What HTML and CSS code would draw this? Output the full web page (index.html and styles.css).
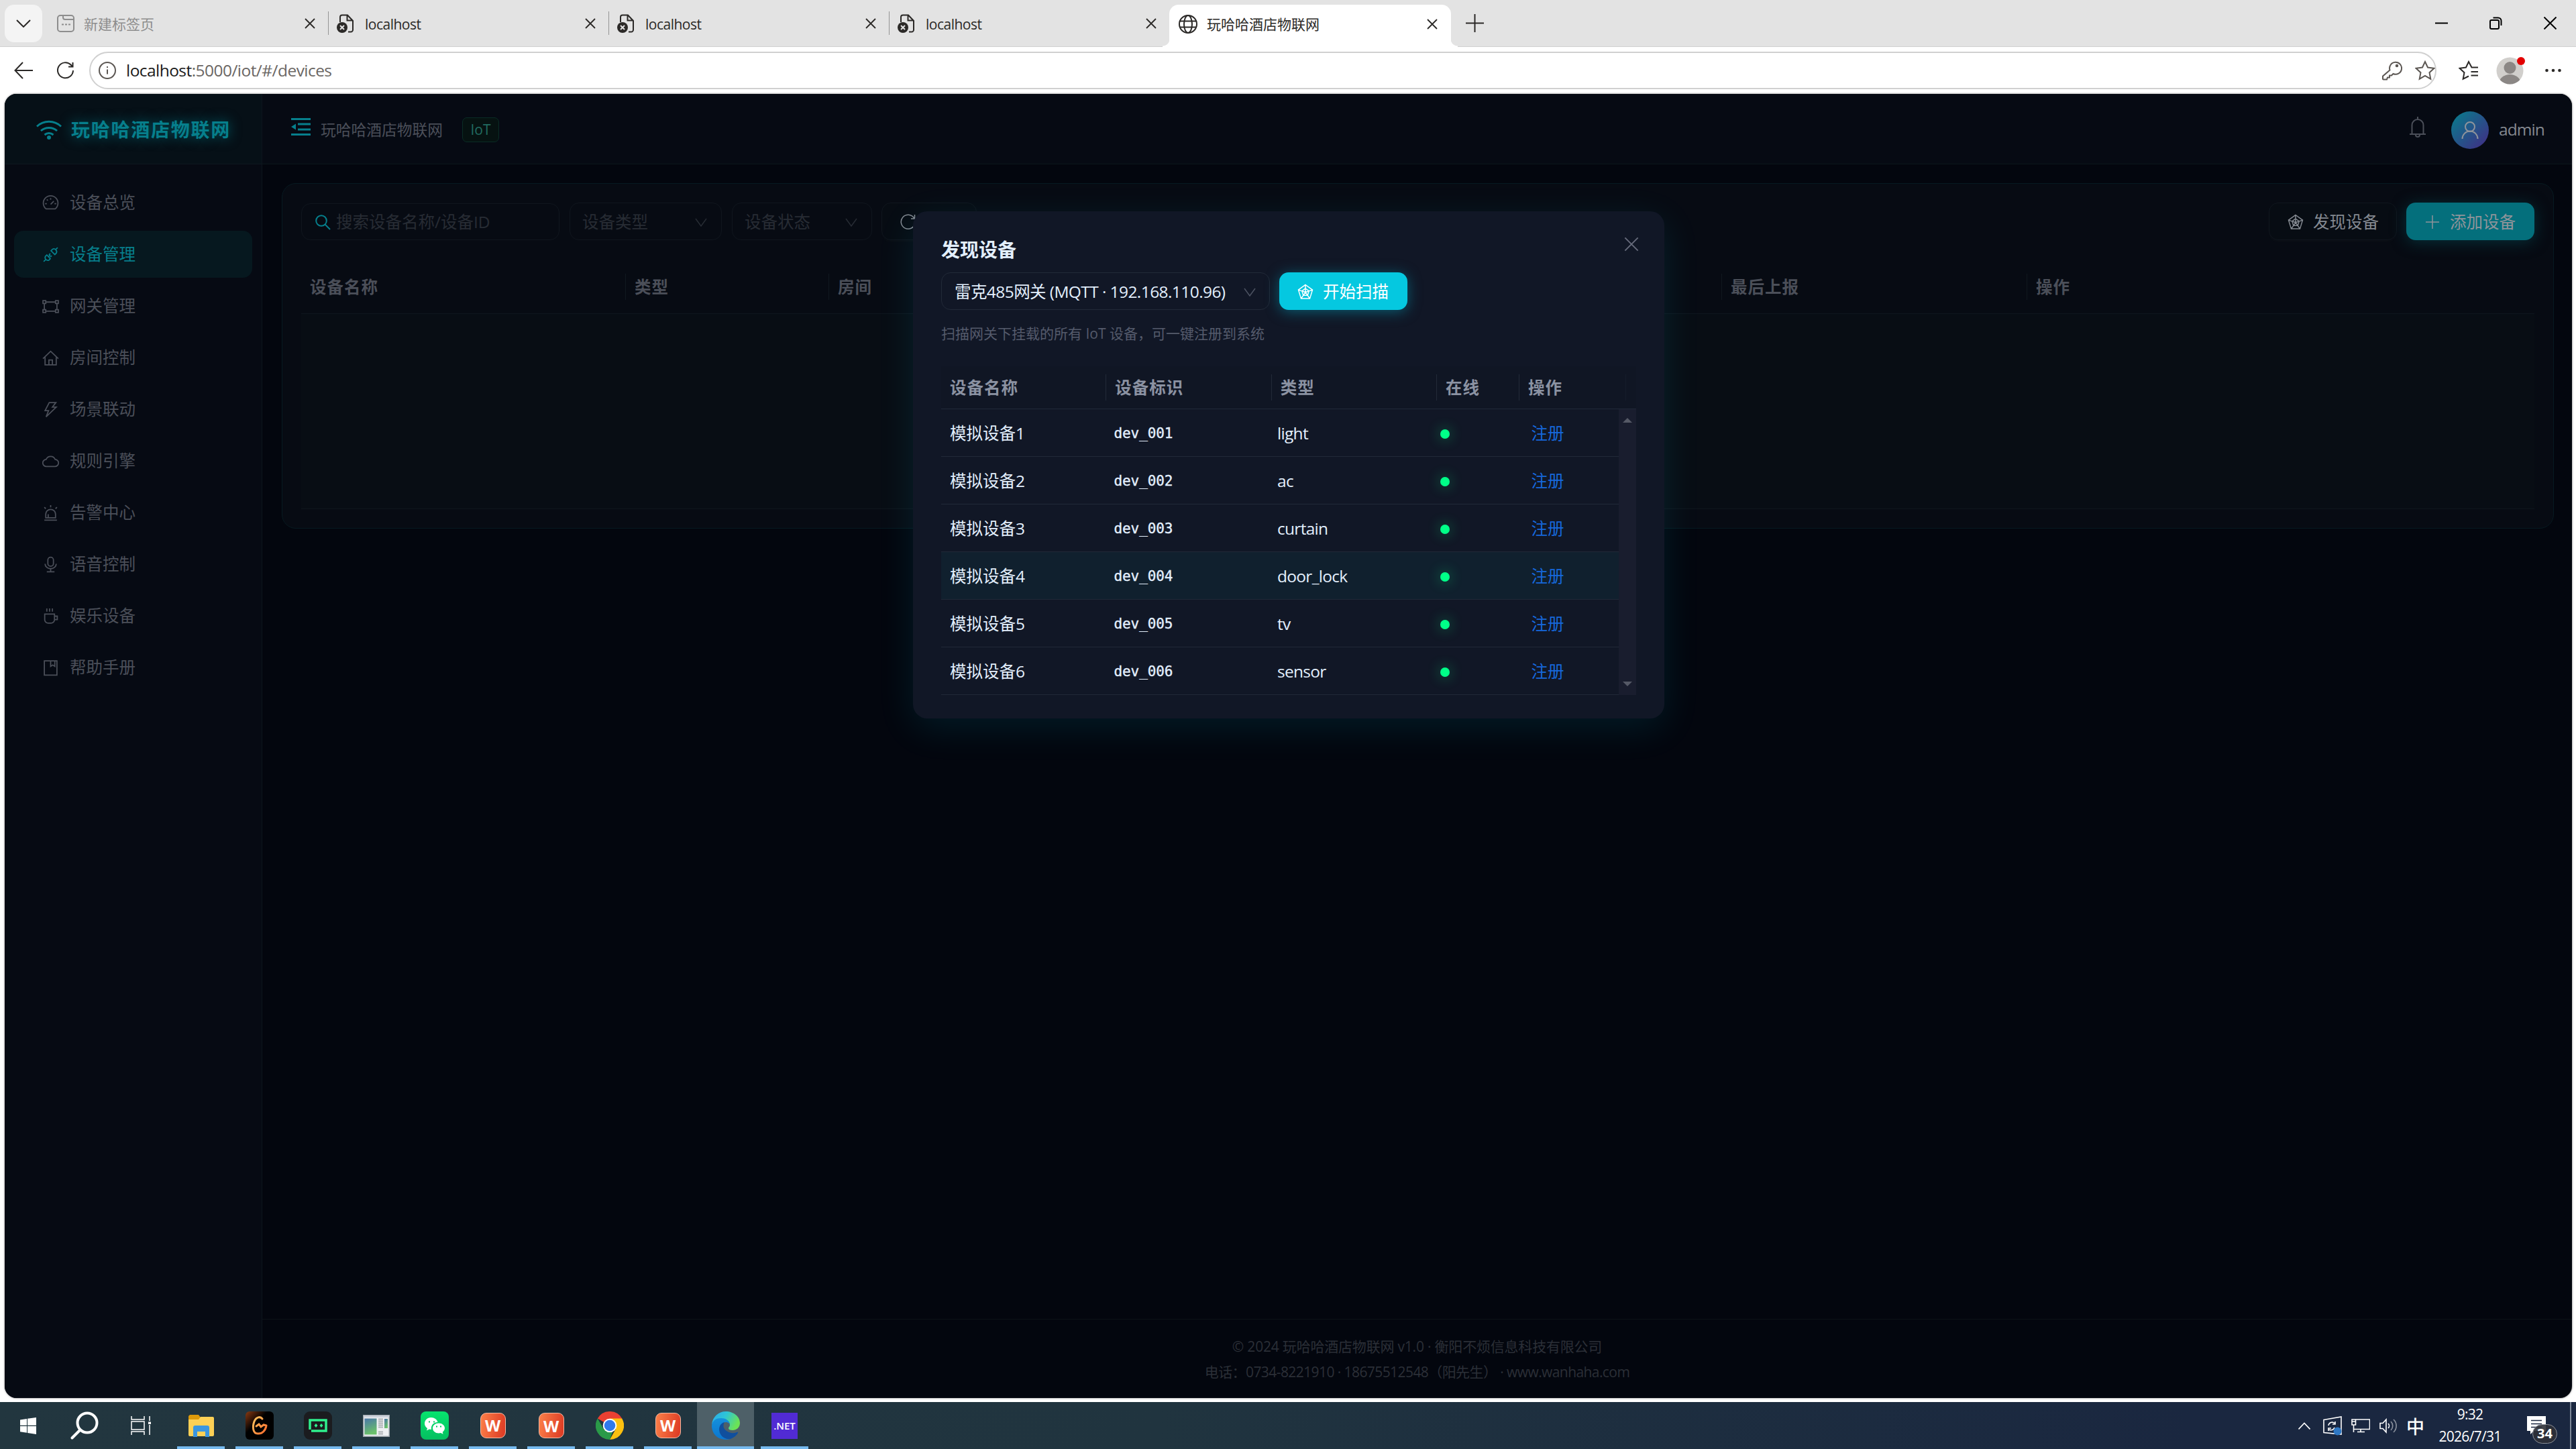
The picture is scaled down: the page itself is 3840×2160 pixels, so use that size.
FILE: index.html
```
<!DOCTYPE html>
<html lang="zh-CN">
<head>
<meta charset="utf-8">
<title>玩哈哈酒店物联网</title>
<link rel="stylesheet" href="styles.css">
</head>
<body>

<svg class="defs" width="0" height="0">
  <symbol id="i-x" viewBox="0 0 16 16"><path d="M1 1l14 14M15 1L1 15"/></symbol>
  <symbol id="i-down" viewBox="0 0 18 13"><path d="M1 1l8 11 8-11"/></symbol>
  <symbol id="i-errpage" viewBox="0 0 26 28">
    <path d="M5 12V4.500a3 3 0 0 1 3-3h8l8 8.500v13.500a3 3 0 0 1-3 3h-4M15.500 1.500V9.500H24"/>
    <circle cx="8" cy="20" r="8" fill="#2b2927" stroke="none"/>
    <path d="M5 17l6 6M11 17l-6 6" stroke="#e3e3e3"/>
  </symbol>
  <symbol id="i-radar" viewBox="0 0 24 24">
    <path d="M12 1.500l10.500 7.600-4 13h-13l-4-13zM12 7l5.200 3.900-2 6.300H8.800l-2-6.300zM12 1.500v11M22.500 9.100L12 12.800M18.500 22.100L12 12.800M5.500 22.100L12 12.800M1.500 9.100L12 12.800"/>
  </symbol>
</svg>

<!-- browser tabs -->
<div class="tabstrip">
  <div class="tabmenu"><svg width="22" height="12" viewBox="0 0 22 12"><path d="M1 1l10 10L21 1"/></svg></div>
  <div class="tab first dim">
    <svg class="fav" width="26" height="26" viewBox="0 0 26 26"><rect x="1" y="1" width="24" height="24" rx="4"/><path d="M9 1v3a3 3 0 0 0 3 3h13M7 14.500h3M12 14.500h3M17 14.500h3"/></svg>
    <span>新建标签页</span><svg class="close" width="16" height="16"><use href="#i-x"/></svg>
  </div>
  <div class="tab"><svg class="fav" width="26" height="28"><use href="#i-errpage"/></svg><span>localhost</span><svg class="close" width="16" height="16"><use href="#i-x"/></svg></div>
  <div class="tab"><svg class="fav" width="26" height="28"><use href="#i-errpage"/></svg><span>localhost</span><svg class="close" width="16" height="16"><use href="#i-x"/></svg></div>
  <div class="tab"><svg class="fav" width="26" height="28"><use href="#i-errpage"/></svg><span>localhost</span><svg class="close" width="16" height="16"><use href="#i-x"/></svg></div>
  <div class="tab active">
    <svg class="fav" width="28" height="28" viewBox="0 0 28 28"><circle cx="14" cy="14" r="13"/><ellipse cx="14" cy="14" rx="6" ry="13"/><path d="M2 9.500h24M2 18.500h24"/></svg>
    <span>玩哈哈酒店物联网</span><svg class="close" width="16" height="16"><use href="#i-x"/></svg>
  </div>
  <svg class="newtab" width="27" height="27" viewBox="0 0 27 27"><path d="M13.500 0v27M0 13.500h27"/></svg>
  <div class="wincontrols">
    <svg width="19" height="19" viewBox="0 0 19 19"><path d="M0 9.500h19"/></svg>
    <svg width="19" height="19" viewBox="0 0 19 19"><rect x="1" y="5" width="13" height="13" rx="2"/><path d="M5.500 1.500H13a4.500 4.500 0 0 1 4.500 4.500v7"/></svg>
    <svg width="19" height="19" viewBox="0 0 19 19"><path d="M.5.500l18 18M18.500.500l-18 18"/></svg>
  </div>
</div>

<!-- address bar -->
<div class="toolbar">
  <svg class="back" width="28" height="26" viewBox="0 0 28 26"><path d="M13 1L1.500 13 13 25M1.500 13H28"/></svg>
  <svg class="reload" width="26" height="26" viewBox="0 0 26 26"><path d="M24 13A11.500 11.500 0 1 1 20.500 4.500l3 3M23.500 1v6.500H17"/></svg>
  <div class="url">
    <svg width="26" height="26" viewBox="0 0 26 26"><circle cx="13" cy="13" r="12"/><path d="M13 11.500v7M13 7v2"/></svg>
    <span class="addr"><b>localhost</b>:5000/iot/#/devices</span>
    <svg class="key" width="30" height="30" viewBox="0 0 30 30"><path d="M11.500 14.500a9 9 0 1 1 5 5.500l-2.500 2.500h-3v3H8l-1 3H2a1 1 0 0 1-1-1v-4z"/><circle cx="22" cy="8" r="1.300" fill="#5c5753"/></svg>
    <svg class="star" width="30" height="30" viewBox="0 0 30 30"><path d="M15 2l4 8.500 9.500 1.200-7 6.500 1.800 9.500L15 23l-8.300 4.700 1.800-9.500-7-6.500 9.500-1.200z"/></svg>
  </div>
  <svg class="favs" width="30" height="30" viewBox="0 0 30 30"><path d="M28 10.500h-8.500L15 2l-4 8.500-9.500 1.200 7 6.500-1.800 9.500L15 23.500M18.500 17H29M18.500 22.500H29M20 10.500h9"/></svg>
  <div class="profile">
    <svg width="41" height="41" viewBox="0 0 41 41"><defs><clipPath id="pc"><circle cx="20.500" cy="20.500" r="20"/></clipPath></defs><circle cx="20.500" cy="20.500" r="20" fill="#d1cfcc"/><g clip-path="url(#pc)" fill="#8b8785"><circle cx="20.500" cy="16" r="9"/><ellipse cx="20.500" cy="39" rx="16" ry="13"/></g></svg>
    <i></i>
  </div>
  <svg class="more" width="24" height="6" viewBox="0 0 24 6"><circle cx="2.500" cy="3" r="2.300"/><circle cx="12" cy="3" r="2.300"/><circle cx="21.500" cy="3" r="2.300"/></svg>
</div>

<!-- application -->
<div class="app">
  <aside class="sidebar">
    <div class="logo">
      <svg width="38" height="32" viewBox="0 0 38 32"><path d="M1 11.500a26 26 0 0 1 36 0M7 18a18 18 0 0 1 24 0M12.500 24a10 10 0 0 1 13 0"/><circle cx="19" cy="28" r="3"/></svg>
      <span>玩哈哈酒店物联网</span>
    </div>
    <ul class="menu">
      <li><svg viewBox="0 0 24 24"><path d="M5.500 20.500a10.500 10.500 0 1 1 13 0zM12 5v2.500M6.500 7l1.500 1.500M4 13h2.500M17.500 13H20M12 14l4.500-4.500"/></svg>设备总览</li>
      <li class="on"><svg viewBox="0 0 24 24"><path d="M2 22l3-3M22 2l-3 3M12.500 6.500l2-2a4 4 0 0 1 5.500 5.500l-2 2zM6.500 12.500l-2 2A4 4 0 0 0 9.500 20l2-2zM9 15l2.500-2.500M11.500 10.500L9.500 12.500M13.500 13.500l-2 2"/></svg>设备管理</li>
      <li><svg viewBox="0 0 24 24"><path d="M1 4h4v4H1zM19 4h4v4h-4zM1 17h4v4H1zM19 17h4v4h-4zM5 6h14M5 19h14M3 8v9M21 8v9"/></svg>网关管理</li>
      <li><svg viewBox="0 0 24 24"><path d="M1 13L12 2.500 23 13M4 11v11h16V11M9.500 22v-7h5v7"/></svg>房间控制</li>
      <li><svg viewBox="0 0 24 24"><path d="M10 2h9.500l-5 6.500H20L5.500 22.500 9 13.500H4z"/></svg>场景联动</li>
      <li><svg viewBox="0 0 24 24"><path d="M6 19.500a5 5 0 0 1-.500-10 7 7 0 0 1 13 0 5 5 0 0 1-.500 10z"/></svg>规则引擎</li>
      <li><svg viewBox="0 0 24 24"><path d="M5 19v-5a7 7 0 0 1 14 0v5zM3 22.500h18M12 1v3M3 4l2 2M21 4l-2 2M8.500 19v-5"/></svg>告警中心</li>
      <li><svg viewBox="0 0 24 24"><rect x="8" y="1.500" width="8" height="13" rx="4"/><path d="M4 11a8 7 0 0 0 16 0M12 18v4.500M6.500 22.500h11"/></svg>语音控制</li>
      <li><svg viewBox="0 0 24 24"><path d="M3.500 9h14v8a5 5 0 0 1-5 5h-4a5 5 0 0 1-5-5zM17.500 12h4v5h-4M6.500 1v4.500M10.500 1v4.500M14.500 1v4.500"/></svg>娱乐设备</li>
      <li><svg viewBox="0 0 24 24"><path d="M3 2h18v20.500H3zM12 2v8l3-2 3 2V2"/></svg>帮助手册</li>
    </ul>
  </aside>

  <div class="main">
    <header class="topbar">
      <svg class="fold" width="29" height="26" viewBox="0 0 29 26"><path d="M0 1.500h29M10 9h19M10 17h19M0 24.500h29"/><path d="M7 8.500v9L0 13z" class="solid"/></svg>
      <span class="crumb">玩哈哈酒店物联网</span>
      <span class="tag">IoT</span>
      <svg class="bell" width="24" height="31" viewBox="0 0 24 31"><path d="M3.500 26V12.500a8.500 8.500 0 0 1 17 0V26M0 26h24M12 0v4M9 27a3 3 0 0 0 6 0"/></svg>
      <div class="avatar"><svg width="26" height="26" viewBox="0 0 26 26"><circle cx="13" cy="8" r="7"/><path d="M1.500 26a11.500 11.500 0 0 1 23 0"/></svg></div>
      <span class="user">admin</span>
    </header>

    <section class="content">
      <div class="card">
        <div class="filters">
          <div class="search"><svg width="23" height="23" viewBox="0 0 23 23"><circle cx="9" cy="9" r="7.800"/><path d="M14.500 14.500l7.500 7.500"/></svg>搜索设备名称/设备ID</div>
          <div class="select s1">设备类型<svg width="18" height="13"><use href="#i-down"/></svg></div>
          <div class="select s2">设备状态<svg width="18" height="13"><use href="#i-down"/></svg></div>
          <div class="btn refresh"><svg width="24" height="24" viewBox="0 0 24 24"><path d="M22 14a10.500 10.500 0 1 1-1.500-8M21.500 1v6H16"/></svg>刷新</div>
          <div class="btn push"><svg width="24" height="24"><use href="#i-radar"/></svg>发现设备</div>
          <div class="btn primary"><svg width="24" height="24" viewBox="0 0 24 24"><path d="M12 2v20M2 12h20"/></svg>添加设备</div>
        </div>
        <div class="thead">
          <div>设备名称</div><div>类型</div><div>房间</div><div>最后上报</div><div>操作</div>
        </div>
        <div class="tbody"></div>
      </div>
    </section>

    <footer class="footer">
      <p class="f1">© 2024 玩哈哈酒店物联网 v1.0 · 衡阳不烦信息科技有限公司</p>
      <p class="f2">电话：0734-8221910 · 18675512548（阳先生） · www.wanhaha.com</p>
    </footer>
  </div>

  <!-- discover dialog -->
  <div class="modal">
    <svg class="mclose" width="22" height="22" viewBox="0 0 16 16"><path d="M1 1l14 14M15 1L1 15"/></svg>
    <h2>发现设备</h2>
    <div class="scan">
      <div class="gateway"><span>雷克485网关 (MQTT · 192.168.110.96)</span><svg width="18" height="13"><use href="#i-down"/></svg></div>
      <div class="btn go"><svg width="24" height="24"><use href="#i-radar"/></svg>开始扫描</div>
    </div>
    <p class="hint">扫描网关下挂载的所有 IoT 设备，可一键注册到系统</p>
    <div class="dhead"><div>设备名称</div><div>设备标识</div><div>类型</div><div>在线</div><div>操作</div><div></div></div>
    <div class="dbody">
      <div class="rows">
        <div class="row"><span>模拟设备1</span><code>dev_001</code><span>light</span><span><i class="dot"></i></span><a>注册</a></div>
        <div class="row"><span>模拟设备2</span><code>dev_002</code><span>ac</span><span><i class="dot"></i></span><a>注册</a></div>
        <div class="row"><span>模拟设备3</span><code>dev_003</code><span>curtain</span><span><i class="dot"></i></span><a>注册</a></div>
        <div class="row hover"><span>模拟设备4</span><code>dev_004</code><span>door_lock</span><span><i class="dot"></i></span><a>注册</a></div>
        <div class="row"><span>模拟设备5</span><code>dev_005</code><span>tv</span><span><i class="dot"></i></span><a>注册</a></div>
        <div class="row"><span>模拟设备6</span><code>dev_006</code><span>sensor</span><span><i class="dot"></i></span><a>注册</a></div>
      </div>
      <div class="scrollbar"><i class="up"></i><i class="down"></i></div>
    </div>
  </div>
</div>

<!-- taskbar -->
<div class="taskbar">
  <div class="sys"><svg width="24" height="25" viewBox="0 0 24 25"><path fill="#fff" d="M0 3.500l10-1.500v9.800H0zM11 1.800L24 0v11.800H11zM0 12.900h10v9.800L0 21.200zM11 12.900h13V25l-13-1.900z"/></svg></div>
  <div class="sys"><svg class="thick" width="42" height="42" viewBox="0 0 42 42"><circle cx="25" cy="17" r="14.500"/><path d="M14 28L2.500 39.500"/></svg></div>
  <div class="sys"><svg class="thin" width="30" height="28" viewBox="0 0 30 28"><path d="M1 0v5h19V0M1 28v-5h19v5M1 8h19v12H1zM28 0v7M28 13v15"/><path fill="#fff" stroke="none" d="M26 8.500h4v3.500h-4z"/></svg></div>

  <div class="task start"><svg width="38" height="34" viewBox="0 0 38 34"><path fill="#dd9a0b" d="M2 1h13l3 4-2 4H0V3z"/><path fill="#fdd056" d="M0 8h15l3-4h18a2 2 0 0 1 2 2v25a2 2 0 0 1-2 2H2a2 2 0 0 1-2-2z"/><path fill="#3b96e0" d="M7 34V20a3 3 0 0 1 3-3h18a3 3 0 0 1 3 3v14h-6v-8H13v8z"/></svg></div>
  <div class="task"><svg width="42" height="42" viewBox="0 0 42 42"><defs><linearGradient id="g1" x2="1" y2="1"><stop stop-color="#8a3a12"/><stop offset=".4" stop-color="#000"/></linearGradient><linearGradient id="g2" x2="1" y2="1"><stop stop-color="#ffc861"/><stop offset="1" stop-color="#ff6a2b"/></linearGradient></defs><rect width="42" height="42" rx="6" fill="url(#g1)"/><path d="M25 11c-3-4-9-3-12 4-3 8-2 18 5 18 7 1 12-5 13-12M16 22l4-3 3 4 4-3 4 1" fill="none" stroke="url(#g2)" stroke-width="3" stroke-linecap="round"/></svg></div>
  <div class="task"><svg width="42" height="42" viewBox="0 0 42 42"><rect width="42" height="42" rx="9" fill="#1b1c1f"/><path fill="none" stroke="#2ff08d" stroke-width="3.500" d="M9 27V13h24v16H11"/><path fill="#2ff08d" d="M18 18l2.500 3-2.500 3-2.500-3zM26 18l2.500 3-2.500 3-2.500-3z"/></svg></div>
  <div class="task"><svg width="40" height="33" viewBox="0 0 40 33"><defs><linearGradient id="g3" y2="1" x2=".3"><stop stop-color="#4a76a8"/><stop offset="1" stop-color="#6bc06a"/></linearGradient></defs><rect x=".5" y=".5" width="39" height="32" fill="#eef0f2" stroke="#9aa2a8"/><path fill="#cdd2dc" d="M1 1h38v3H1z"/><rect x="2.500" y="5.500" width="18" height="24" fill="url(#g3)"/><rect x="32" y="6" width="5" height="14" fill="url(#g3)"/><path stroke="#aeb2b5" d="M23 6.500h7M23 9.500h7M23 12.500h7M23 15.500h7M23 18.500h7M23 25.500h7M23 28.500h7"/></svg></div>
  <div class="task"><svg width="42" height="42" viewBox="0 0 42 42"><defs><linearGradient id="g4" x2="0" y2="1"><stop stop-color="#06e46e"/><stop offset="1" stop-color="#05bf60"/></linearGradient></defs><rect width="42" height="42" rx="8" fill="url(#g4)"/><path fill="#fff" d="M15.500 9C10 9 6 13 6 18c0 3 1.500 5.500 4 7l-1 3.500 4-2c1 .3 2 .4 3 .4C15 20 20 16 25.500 16 24.500 12 20.500 9 15.500 9z"/><path fill="#fff" d="M27 17.500c-5 0-9 3.200-9 7.500s4 7.500 9 7.500c1 0 2-.2 3-.500l3.500 1.700-.800-3c2-1.500 3.300-3.500 3.300-5.700 0-4.300-4-7.500-9-7.500z"/><path d="M12 14.500h2v2h-2zM19 14.500h2v2h-2zM23 21.500h2v2h-2zM29 21.500h2v2h-2z" fill="#07c963"/></svg></div>
  <div class="task"><div class="wps">W</div></div>
  <div class="task"><div class="wps low">W</div></div>
  <div class="task"><svg width="42" height="42" viewBox="0 0 42 42"><path fill="#ea4032" d="M21 21L2.800 10.500a21 21 0 0 1 36.400 0z"/><path fill="#fcc010" d="M21 10.500h18.200A21 21 0 0 1 21 42l9-16z"/><path fill="#2a9a48" d="M2.800 10.500L12 26.500l9 5 4-1L21 42A21 21 0 0 1 2.800 10.500z"/><circle cx="21" cy="21" r="10.300" fill="#fff"/><circle cx="21" cy="21" r="8.300" fill="#3079ee"/></svg></div>
  <div class="task"><div class="wps">W</div></div>
  <div class="task current"><svg width="42" height="42" viewBox="0 0 42 42"><defs><linearGradient id="e1" x2="1" y2=".4"><stop stop-color="#2ba8ee"/><stop offset=".5" stop-color="#2ec5d6"/><stop offset="1" stop-color="#6be356"/></linearGradient><linearGradient id="e2" x2="0" y2="1"><stop stop-color="#1590dc"/><stop offset="1" stop-color="#0b76cf"/></linearGradient></defs><path fill="url(#e1)" d="M0 20C1 8 10 0 21 0c12 0 21 8 21 17 0 7-5 11-11 11-4 0-6-1-6-3 0-1.500 2-2 2-5 0-4-4-9-12-9C8 11 2 14 0 20z"/><path fill="url(#e2)" d="M0 21c1-8 7-11 14-11 8 0 13 5 13 10-1-3-3-4-6-4-5 0-7 6-5 12 2 7 7 11 12 13C13 45 0 36 0 21z"/><path fill="#104f9d" d="M19 16c-8 2-10 11-6 18 3 5 9 8 15 7 5-2 9-5 11-9 .5-1-.5-1.500-1.500-1-10 4-19-3-20-8 0-3 0-5 1.500-7z"/></svg></div>
  <div class="task"><div class="net">.NET</div></div>

  <div class="tray">
    <svg class="t1" width="18" height="11" viewBox="0 0 18 11"><path d="M.5 10.500L9 1.500l8.500 9"/></svg>
    <svg class="t2" width="28" height="29" viewBox="0 0 28 29"><path d="M1 5.500L27 1v26L1 24.500z"/><path d="M8 14a5.500 5.500 0 0 1 9-3.500M18 8v4h-4M17 17a5.500 5.500 0 0 1-8 3M8 22v-4h4"/><circle cx="21.500" cy="22.500" r="6" fill="#2f78c4" stroke="none"/></svg>
    <svg class="t3" width="28" height="21" viewBox="0 0 28 21"><path d="M7 1h20.500v14.500H4M14 15.500v4M9 19.500h11M1 1h5.500v8H1zM3.500 9v11M1 4h5.500"/></svg>
    <svg class="t4" width="27" height="23" viewBox="0 0 27 23"><path d="M1 7.500h4l5-5.500v19l-5-5.500H1zM13 8a5 5 0 0 1 0 7"/><path class="faint" d="M17 5a9 9 0 0 1 0 13M21 2a13 13 0 0 1 0 19"/></svg>
    <span class="ime">中</span>
    <div class="clock"><span>9:32</span><span>2026/7/31</span></div>
    <div class="notice"><svg width="28" height="29" viewBox="0 0 28 29"><path fill="#fff" d="M0 0h28v22H10l-5 5v-5H0z"/><path stroke="#1a2740" stroke-width="1.600" d="M6 6.500h16M6 11.500h16M6 16.500h16"/></svg><b>34</b></div>
  </div>
</div>

</body>
</html>
```

FILE: styles.css
```
* { box-sizing: border-box; }
body {
  margin: 0; width: 3840px; height: 2160px; overflow: hidden; background: #fff;
  display: flex; flex-direction: column;
  font: 24.5px/1 "Open Sans", "Noto Sans CJK SC", sans-serif;
}
svg { display: block; flex: none; fill: none; stroke: currentColor; stroke-width: 2; }
.defs { position: absolute; }
p, h2, ul { margin: 0; padding: 0; }

/* tabs */
.tabstrip { height: 70px; flex: none; display: flex; align-items: center; background: #e3e3e3; border-bottom: 1px solid #d0d0d0; font-size: 21px; color: #2b2927; padding-left: 7px; }
.tabmenu { width: 56px; height: 56px; border-radius: 14px; background: #f4f4f4; display: flex; align-items: center; justify-content: center; }
.tab { width: 418px; height: 35px; border-left: 1px solid #959595; display: flex; align-items: center; padding: 0 19px 0 12px; }
.tab span { flex: 1; padding: 3px 0 0 16px; letter-spacing: -.5px; }
.tab.first { width: 426px; border: 0; padding-left: 22px; }
.tab.first span { padding-left: 14px; letter-spacing: 0; }
.dim .fav, .dim span { color: #8d8d8d; }
.close { stroke-width: 1.8; }
.tab.active { position: relative; width: 420px; height: 63px; align-self: flex-end; margin-bottom: -1px; background: #fff; border: 0; border-radius: 14px 14px 0 0; padding: 0 20px 6px 14px; }
.tab.active span { padding: 2px 0 0 14px; letter-spacing: 0; }
.tab.active:before, .tab.active:after { content: ""; position: absolute; bottom: 0; width: 10px; height: 12px; }
.tab.active:before { left: -10px; background: radial-gradient(circle at 0 0, #e3e3e3 10px, #fff 11px); }
.tab.active:after { right: -10px; background: radial-gradient(circle at 100% 0, #e3e3e3 10px, #fff 11px); }
.newtab { margin-left: 22px; }
.wincontrols { margin-left: auto; display: flex; gap: 62px; padding-right: 29px; color: #000; }

/* address bar */
.toolbar { height: 70px; flex: none; display: flex; align-items: center; color: #2b2927; padding-left: 21px; }
.reload { margin-left: 36px; }
.url { width: 3499px; height: 56px; margin-left: 22px; border: 2px solid #d0d0d0; border-radius: 28px; display: flex; align-items: center; color: #5c5753; padding: 0 0 0 12px; }
.addr { flex: 1; margin-left: 15px; color: #6b6764; letter-spacing: -.55px; }
.addr b { font-weight: 400; color: #1b1b1b; }
.star { margin: 0 0 0 19px; }
.url { padding-right: 0; }
.key { margin-right: 0; }
.favs { margin-left: 33px; }
.profile { position: relative; margin-left: 26px; }
.profile svg { stroke: none; }
.profile i { position: absolute; right: -2px; top: 0; width: 12px; height: 12px; border-radius: 50%; background: #e30000; }
.more { margin-left: 32px; fill: #2b2927; stroke: none; }

/* app frame */
.app { position: relative; display: flex; height: 1944px; margin: 0 6px 0 7px; border-radius: 18px; overflow: hidden; background: #03060e; box-shadow: 0 0 3px #777; flex: none; }
.sidebar { width: 384px; flex: none; background: #060a13; border-right: 1px solid #0d151d; }
.logo { height: 105px; display: flex; align-items: center; gap: 14px; padding: 2px 0 0 47px; background: #061017; border-bottom: 1px solid #0d171f; color: #067f8c; font-size: 28px; font-weight: 700; letter-spacing: 1.75px; white-space: nowrap; }
.logo span { text-shadow: 0 0 18px #04606c; }
.logo svg { stroke-width: 3; }
.logo circle { fill: currentColor; stroke: none; }
.menu { list-style: none; padding: 22px 14px; display: flex; flex-direction: column; gap: 7px; color: #4b4f59; }
.menu li { height: 70px; border-radius: 14px; display: flex; align-items: center; padding-left: 42px; padding-top: 1px; }
.menu svg { width: 25px; height: 25px; margin-right: 16px; stroke-width: 1.7; }
.menu .on { background: #06181f; color: #067f8c; }

.main { flex: 1; display: flex; flex-direction: column; }
.topbar { height: 105px; flex: none; display: flex; align-items: center; padding: 3px 42px 0 43px; background: #060a13; border-bottom: 1px solid #0b161c; color: #4b4f59; }
.fold { color: #067f8c; margin-bottom: 10px; stroke-width: 3; }
.solid { fill: currentColor; stroke: none; }
.crumb { font-size: 22.75px; margin-left: 15px; padding-top: 2px; }
.tag { margin-left: 29px; width: 55px; height: 37px; border: 1px solid #0a2c26; border-radius: 7px; background: #061211; color: #216b60; font-size: 21px; display: flex; align-items: center; justify-content: center; }
.bell { margin: 0 38px 8px auto; }
.avatar { width: 56px; height: 56px; border-radius: 50%; background: linear-gradient(135deg, #067f8c, #432a85); display: flex; align-items: center; justify-content: center; color: #8f949c; }
.user { width: 67px; margin-left: 15px; color: #83888f; letter-spacing: -.9px; }

.content { flex: 1; padding: 28px 27px 0 29px; }
.card { height: 515px; border: 1px solid #071a21; border-radius: 21px; background: #070b13; padding: 28px; }
.filters { display: flex; align-items: center; height: 56px; color: #272c34; }
.search { width: 385px; height: 55px; border: 1px solid #10161e; border-radius: 14px; display: flex; align-items: center; gap: 8px; padding: 2px 0 0 20px; }
.search svg { color: #067f8c; }
.select { height: 56px; border: 1px solid #10161e; border-radius: 14px; display: flex; align-items: center; justify-content: space-between; padding: 2px 21px 0 18px; margin-left: 15px; }
.select svg { stroke-width: 1.5; }
.s1 { width: 227px; }
.s2 { width: 209px; }
.btn { height: 56px; width: 191px; border: 1px solid #10161e; border-radius: 14px; display: flex; align-items: center; padding: 2px 0 0 27px; gap: 14px; color: #848991; background: #070c13; box-shadow: 0 3px 0 #090d14; white-space: nowrap; }
.btn svg { stroke-width: 1.5; }
.refresh { width: 142px; margin-left: 14px; }
.push { margin-left: auto; }
.primary, .go { margin-left: 14px; border: 0; }
.primary { background: #046f7c; color: #8f949a; box-shadow: 0 3px 22px #063039; }
.go { background: #05c8e0; color: #fff; box-shadow: 0 3px 20px #0a5b70; }
.thead { display: flex; height: 80px; margin-top: 30px; border-bottom: 1px solid #0f161e; background: #070b13; color: #4b4f59; font-weight: 700; letter-spacing: 1px; }
.thead div { position: relative; display: flex; align-items: center; padding: 2px 0 0 13px; }
.thead div:nth-child(1) { width: 484px; }
.thead div:nth-child(2) { width: 303px; }
.thead div:nth-child(3) { width: 1331px; }
.thead div:nth-child(4) { width: 455px; }
.thead div:not(:last-child):after, .dhead div:not(:last-child):after { content: ""; position: absolute; right: 0; top: 50%; width: 1px; height: 39px; margin-top: -20px; background: #10181f; }
.tbody { height: 291px; background: #080d14; border-bottom: 1px solid #0f161e; }

.footer { height: 118px; flex: none; border-top: 1px solid #0d1218; padding-top: 21px; text-align: center; font-size: 21px; line-height: 38px; color: #2b2f37; white-space: nowrap; }
.f1 { letter-spacing: -.2px; }
.f2 { letter-spacing: -.58px; }

/* dialog */
.modal { position: absolute; left: 1354px; top: 175px; width: 1120px; height: 756px; border-radius: 21px; background: #111726; padding: 42px; box-shadow: 0 14px 56px rgba(0, 229, 255, .1); color: #e3effd; }
.mclose { position: absolute; right: 38px; top: 38px; color: #666b7b; stroke-width: 1.4; }
.modal h2 { font-size: 28px; line-height: 30px; }
.scan { display: flex; margin-top: 19px; }
.gateway { width: 490px; height: 56px; border: 1px solid #222a38; border-radius: 14px; display: flex; align-items: center; justify-content: space-between; padding: 2px 20px 0 19px; }
.gateway span { white-space: nowrap; letter-spacing: -.58px; }
.gateway svg { color: #4d5362; stroke-width: 1.5; }
.hint { margin-top: 20px; font-size: 21px; line-height: 30px; color: #555b6c; white-space: nowrap; }
.dhead { display: flex; height: 64px; margin-top: 34px; background: #101624; border-bottom: 1px solid #212938; color: #8b92a2; font-weight: 700; letter-spacing: 1px; }
.dhead div { position: relative; width: 246.4px; display: flex; align-items: center; padding: 2px 0 0 13px; }
.dhead div:nth-child(4) { width: 123px; }
.dhead div:nth-child(5) { width: 159px; }
.dhead div:nth-child(6) { width: 15px; padding: 0; }
.dhead div:not(:last-child):after { background: #222a38; }
.dhead div:nth-child(5):after { background: #161d2b !important; }
.dbody { display: flex; }
.rows { width: 1010px; }
.row { display: flex; align-items: center; height: 71px; padding-top: 3px; border-bottom: 1px solid #212938; }
.row > * { width: 243.5px; padding-left: 13px; }
.row span:nth-child(3) { letter-spacing: -.7px; padding-left: 14px; }
.row span:nth-child(4) { width: 122px; }
.row code { font: 21px/1 "DejaVu Sans Mono", monospace; letter-spacing: -.1px; -webkit-text-stroke: .4px; padding-left: 14px; }
.row a { width: 140px; padding-left: 27px; color: #1668dc; }
.hover { background: #10202e; }
.dot { display: block; width: 14px; height: 14px; border-radius: 50%; background: #00ff88; box-shadow: 0 0 20px rgba(0, 255, 136, .45); }
.scrollbar { width: 26px; background: #191d2e; display: flex; flex-direction: column; justify-content: space-between; align-items: center; padding: 13px 0; }
.scrollbar i { border: 7px solid transparent; }
.up { border-top: 0 !important; border-bottom-color: #555966 !important; }
.down { border-bottom: 0 !important; border-top-color: #555966 !important; }

/* taskbar */
.taskbar { height: 70px; margin-top: 6px; flex: none; display: flex; background: linear-gradient(90deg, #22363f, #20343f 45%, #1a2740 85%); color: #fff; }
.taskbar svg { stroke: none; }
.taskbar .thick { stroke: #fff; stroke-width: 4; stroke-linecap: round; }
.taskbar .thin { stroke: #fff; stroke-width: 1.5; }
.sys { width: 84px; display: flex; align-items: center; justify-content: center; }
.task { position: relative; width: 87px; display: flex; align-items: center; justify-content: center; }
.task.start { margin-left: 4px; }
.task:after { content: ""; position: absolute; left: 8px; bottom: 0; width: 71px; height: 4px; background: #75b9ee; }
.current { background: #4e6068; width: 85px; margin-right: 2px; }
.current:after { left: 0; width: 85px; }
.wps { width: 38px; height: 38px; border: 1px solid #f0b9a4; border-radius: 9px; background: linear-gradient(100deg, #fc8049, #dc3822); font: 700 24px/36px "Open Sans", sans-serif; text-align: center; }
.low { line-height: 38px; }
.net { width: 39px; height: 39px; background: #512bd4; font-size: 15px; font-weight: 600; line-height: 39px; text-align: center; }
.tray { margin-left: auto; display: flex; align-items: center; padding-right: 7px; position: relative; border-right: 2px solid #7d8797; margin-right: 7px; }
.tray svg { stroke: #fff; stroke-width: 1.6; }
.t2 { margin-left: 19px; }
.t3, .t4 { margin-left: 14px; }
.faint { opacity: .5; }
.ime { font: 500 27px/1 "Noto Sans CJK SC", sans-serif; margin-left: 13px; }
.clock { width: 112px; margin-left: 12px; font-size: 21px; line-height: 33px; display: flex; flex-direction: column; align-items: center; letter-spacing: -.7px; }
.notice { position: relative; width: 28px; margin: 0 29px 0 29px; }
.tray .notice svg { stroke: none; }
.notice b { position: absolute; left: 8px; top: 12px; width: 37px; height: 29px; border: 1px solid #8d9199; border-radius: 15px; background: rgba(45, 48, 55, .9); font-size: 20px; line-height: 26px; text-align: center; }
```
